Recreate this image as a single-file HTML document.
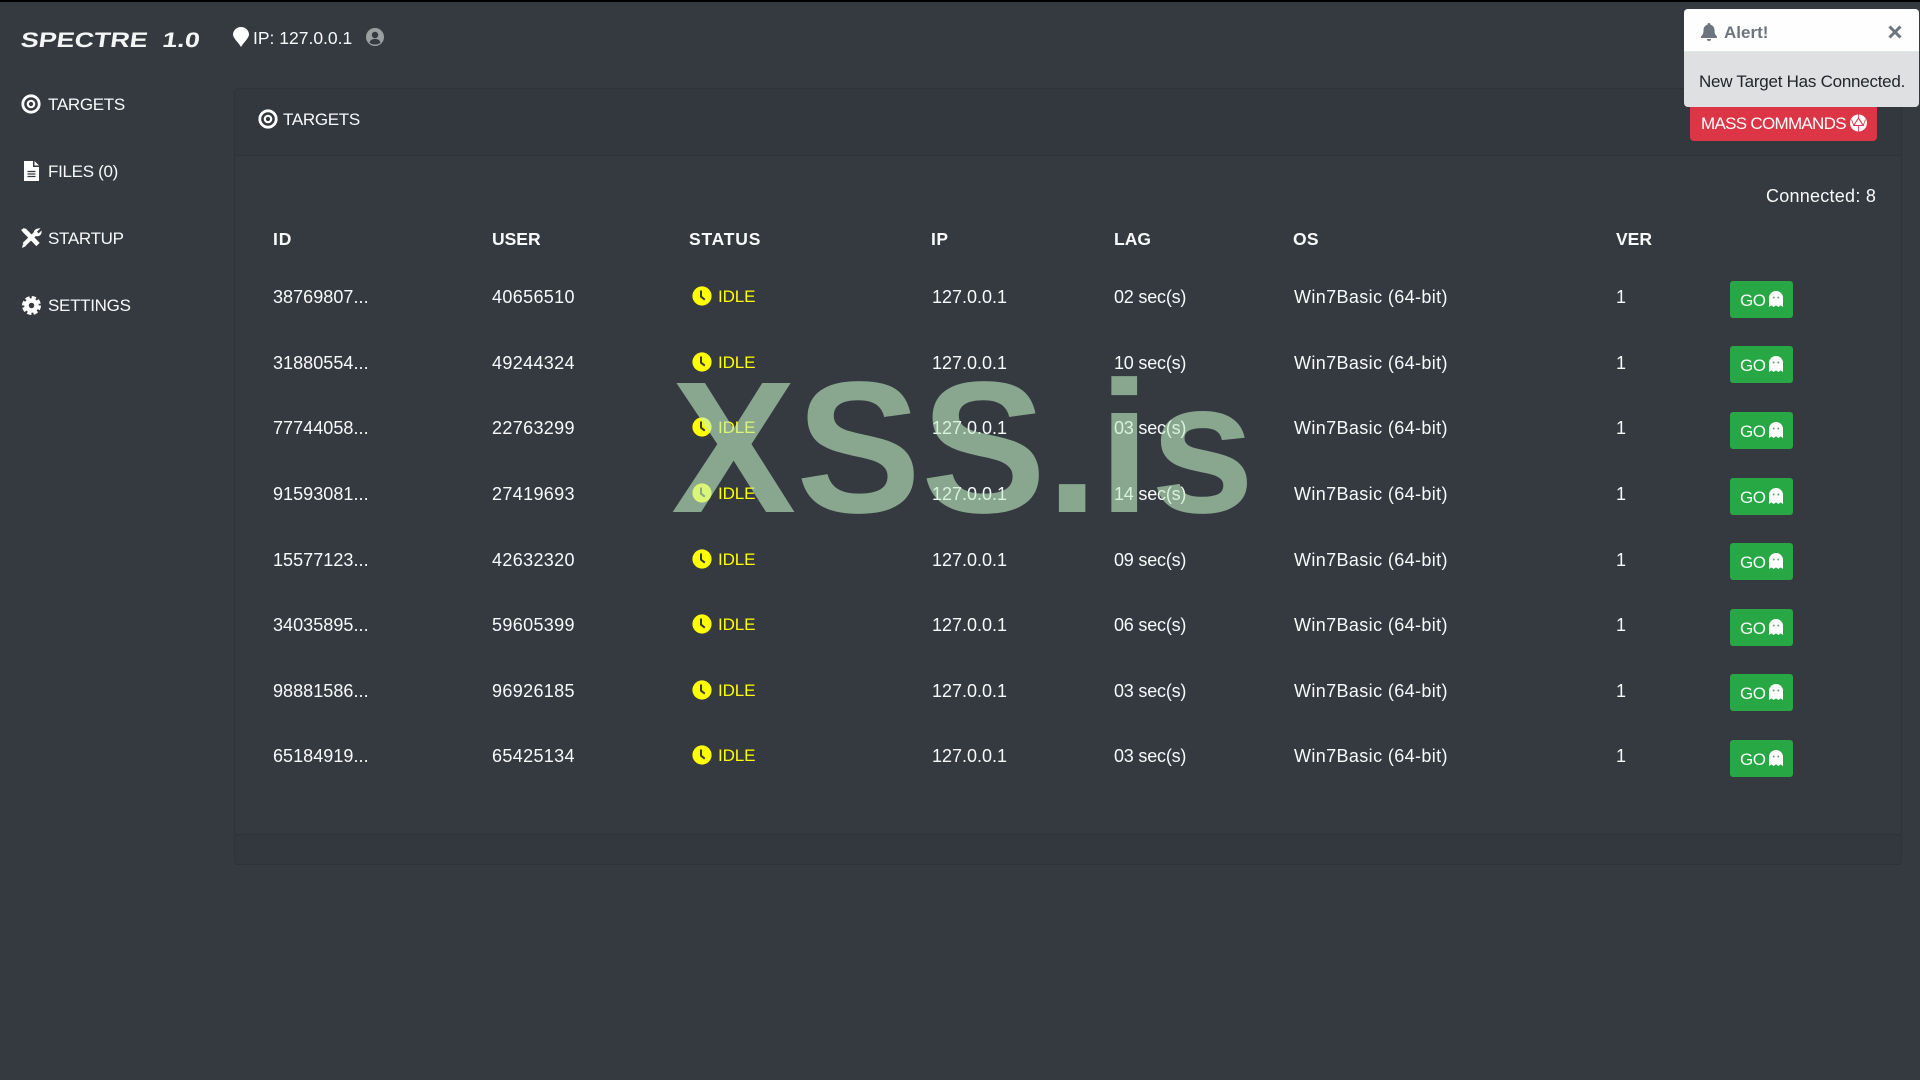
<!DOCTYPE html>
<html><head><meta charset="utf-8"><title>Spectre</title>
<style>
*{box-sizing:border-box}
html,body{margin:0;padding:0;width:1920px;height:1080px;overflow:hidden;background:#343a40}
body{font-family:"Liberation Sans",sans-serif;font-size:18px;color:#f8f9fa;position:relative;border-top:2px solid #000}
.a{position:absolute;white-space:nowrap;line-height:24px;height:24px}
svg{position:absolute;display:block}
#wrap{position:absolute;left:0;top:-2px;width:1920px;height:1080px}
.nav{font-size:17px;letter-spacing:-.3px;left:48px}
.card{position:absolute;left:234px;top:88px;width:1668px;height:777px;border:1px solid #2e3338;border-radius:4px}
.h1{position:absolute;left:0;top:0;right:0;height:67px;border-bottom:1px solid #2e3338;background:#32383e}
.f1{position:absolute;left:0;bottom:0;right:0;height:30px;border-top:1px solid #2e3338;background:#32383e}
.th{font-weight:bold;font-size:17.5px;top:227px}
.r{position:absolute;left:0;width:1920px;height:24px}
.r span{position:absolute;top:0;line-height:24px;white-space:nowrap}
.c1{left:273px;letter-spacing:.05px}.c2{left:492px;letter-spacing:.35px}.c4{left:932px}.c5{left:1114px;letter-spacing:-.2px}.c6{left:1294px;letter-spacing:.38px}.c7{left:1616px}
.c3{left:718px;color:#ff0;font-size:17px;letter-spacing:-.1px}
.go{position:absolute;left:1730px;width:63px;height:37px;background:#28a745;border-radius:3px;top:-4px}
.g2{top:-5px}
.go b{position:absolute;left:10px;top:8px;font-weight:normal;font-size:17px;line-height:24px;letter-spacing:-.5px;color:#f8f9fa}
.go svg{left:39px;top:10px}
.r>svg{left:692px;top:1px}
#wm{position:absolute;left:671px;top:343px;font-family:"Liberation Sans",sans-serif;font-weight:bold;font-size:187.5px;line-height:208px;height:208px;color:rgba(195,238,197,.6);white-space:nowrap;z-index:5}
.toast{position:absolute;left:1684px;top:9px;width:235px;height:98px;border-radius:4px;overflow:hidden;background:#dfe0e2;z-index:9}
.toast .t{position:absolute;left:0;top:0;right:0;height:43px;background:#fdfefd;border-bottom:1px solid #dfe9df}
.btn{position:absolute;left:1690px;top:104px;width:187px;height:37px;background:#dc3545;border-radius:4px}
</style></head>
<body>
<div id="wrap">
<svg width="0" height="0" style="position:absolute">
<defs>
<symbol id="clock" viewBox="0 0 20 20"><circle cx="10" cy="10" r="9.6" fill="#ff0"/><path d="M9 4.500v6.200l3.800 3" fill="none" stroke="#343a40" stroke-width="2"/></symbol>
<symbol id="ghost" viewBox="0 0 14 16"><path d="M0 16V7a7 7 0 0 1 14 0v9l-2.300-1.600L9.300 16 7 14.400 4.700 16 2.300 14.400z" fill="#fff"/><circle cx="4.700" cy="6.500" r="1" fill="#6a9a78"/><circle cx="9.300" cy="6.500" r="1" fill="#6a9a78"/></symbol>
<symbol id="target" viewBox="0 0 20 20"><circle cx="10" cy="10" r="8.200" fill="none" stroke="#fff" stroke-width="2.800"/><circle cx="10" cy="10" r="3.200" fill="none" stroke="#fff" stroke-width="2.200"/></symbol>
</defs>
</svg>

<svg style="left:0;top:20px" width="220" height="40"><g transform="translate(20 27) skewX(-8)"><text x="0" y="0" fill="#f4f5f5" font-family="Liberation Sans" font-size="21" font-weight="bold" textLength="179" lengthAdjust="spacingAndGlyphs" xml:space="preserve">SPECTRE  1.0</text></g></svg>

<svg style="left:233px;top:27px" width="16" height="20" viewBox="0 0 16 20"><path d="M8 20C5 15 0 11 0 7.500a8 7.500 0 0 1 16 0C16 11 11 15 8 20z" fill="#fff"/></svg>
<span class="a" style="left:253px;top:26px;font-size:17.5px">IP: 127.0.0.1</span>
<svg style="left:366px;top:28px" width="18" height="18" viewBox="0 0 18 18"><circle cx="9" cy="9" r="9" fill="#9aa09f"/><circle cx="9" cy="7" r="3.200" fill="#343a40"/><path d="M3.500 14.500c1-3 3-3.500 5.500-3.500s4.500.5 5.500 3.500c-1.500 1.500-3.500 2-5.500 2s-4-.5-5.500-2z" fill="#343a40"/></svg>

<svg style="left:21px;top:94px" width="20" height="20"><use href="#target"/></svg>
<span class="a nav" style="top:93px">TARGETS</span>
<svg style="left:24px;top:161px" width="15" height="20" viewBox="0 0 15 20"><path d="M0 0h9v6h6v14H0z" fill="#fff"/><path d="M10.500 0l4.500 4.500h-4.500z" fill="#fff"/><path d="M3.500 10.500h8M3.500 13h8M3.500 15.500h8" stroke="#343a40" stroke-width="1.200"/></svg>
<span class="a nav" style="top:160px">FILES (0)</span>
<svg style="left:21px;top:228px" width="21" height="20" viewBox="0 0 21 20"><path d="M3 2l14 14.500" stroke="#fff" stroke-width="4.500"/><path d="M0 2l3-2 5 4-3 3z" fill="#fff"/><path d="M3 16.500L14.500 5.500" stroke="#fff" stroke-width="4"/><path d="M13 7c-1.500-3.500 1.500-7.500 6.500-6.500L16 3.500l1.500 2 3-3c.8 5-3.500 7.500-7.500 4.500z" fill="#fff"/><path d="M1 20l1-4 3 2z" fill="#fff"/></svg>
<span class="a nav" style="top:227px">STARTUP</span>
<svg style="left:22px;top:296px" width="19" height="19" viewBox="0 0 19 19"><circle cx="9.500" cy="9.500" r="5" fill="none" stroke="#fff" stroke-width="4.500"/><circle cx="9.500" cy="9.500" r="8" fill="none" stroke="#fff" stroke-width="3" stroke-dasharray="4.200 2.080"/></svg>
<span class="a nav" style="top:294px">SETTINGS</span>

<div class="card"><div class="h1"></div><div class="f1"></div></div>
<svg style="left:258px;top:109px" width="20" height="20"><use href="#target"/></svg>
<span class="a nav" style="left:283px;top:108px">TARGETS</span>

<div class="btn"></div>
<span class="a" style="left:1701px;top:112px;font-size:17px;letter-spacing:-.7px;color:#fff">MASS COMMANDS</span>
<svg style="left:1850px;top:114px" width="17" height="18" viewBox="0 0 17 18"><circle cx="8.500" cy="9" r="8.500" fill="#fff"/><path d="M8.500 4l4.700 7.500H3.800z" fill="none" stroke="#dc3545" stroke-width="1.100"/><path d="M1.500 5.500l2.300 6M15.500 5.500l-2.300 6M8.500 17.500v-6M8.500 4V.5" stroke="#dc3545" stroke-width=".8"/></svg>

<span class="a" style="left:1766px;top:184px;letter-spacing:.25px">Connected: 8</span>

<span class="a th" style="left:273px;letter-spacing:.9px">ID</span>
<span class="a th" style="left:492px">USER</span>
<span class="a th" style="left:689px;letter-spacing:.8px">STATUS</span>
<span class="a th" style="left:931px;letter-spacing:.5px">IP</span>
<span class="a th" style="left:1114px">LAG</span>
<span class="a th" style="left:1293px;letter-spacing:.3px">OS</span>
<span class="a th" style="left:1616px">VER</span>

<div class="r" style="top:285px"><span class="c1">38769807...</span><span class="c2">40656510</span><svg width="20" height="20"><use href="#clock"/></svg><span class="c3">IDLE</span><span class="c4">127.0.0.1</span><span class="c5">02 sec(s)</span><span class="c6">Win7Basic (64-bit)</span><span class="c7">1</span><div class="go"><b>GO</b><svg width="14" height="16"><use href="#ghost"/></svg></div></div>
<div class="r" style="top:351px"><span class="c1">31880554...</span><span class="c2">49244324</span><svg width="20" height="20"><use href="#clock"/></svg><span class="c3">IDLE</span><span class="c4">127.0.0.1</span><span class="c5">10 sec(s)</span><span class="c6">Win7Basic (64-bit)</span><span class="c7">1</span><div class="go g2"><b>GO</b><svg width="14" height="16"><use href="#ghost"/></svg></div></div>
<div class="r" style="top:416px"><span class="c1">77744058...</span><span class="c2">22763299</span><svg width="20" height="20"><use href="#clock"/></svg><span class="c3">IDLE</span><span class="c4">127.0.0.1</span><span class="c5">03 sec(s)</span><span class="c6">Win7Basic (64-bit)</span><span class="c7">1</span><div class="go"><b>GO</b><svg width="14" height="16"><use href="#ghost"/></svg></div></div>
<div class="r" style="top:482px"><span class="c1">91593081...</span><span class="c2">27419693</span><svg width="20" height="20"><use href="#clock"/></svg><span class="c3">IDLE</span><span class="c4">127.0.0.1</span><span class="c5">14 sec(s)</span><span class="c6">Win7Basic (64-bit)</span><span class="c7">1</span><div class="go"><b>GO</b><svg width="14" height="16"><use href="#ghost"/></svg></div></div>
<div class="r" style="top:548px"><span class="c1">15577123...</span><span class="c2">42632320</span><svg width="20" height="20"><use href="#clock"/></svg><span class="c3">IDLE</span><span class="c4">127.0.0.1</span><span class="c5">09 sec(s)</span><span class="c6">Win7Basic (64-bit)</span><span class="c7">1</span><div class="go g2"><b>GO</b><svg width="14" height="16"><use href="#ghost"/></svg></div></div>
<div class="r" style="top:613px"><span class="c1">34035895...</span><span class="c2">59605399</span><svg width="20" height="20"><use href="#clock"/></svg><span class="c3">IDLE</span><span class="c4">127.0.0.1</span><span class="c5">06 sec(s)</span><span class="c6">Win7Basic (64-bit)</span><span class="c7">1</span><div class="go"><b>GO</b><svg width="14" height="16"><use href="#ghost"/></svg></div></div>
<div class="r" style="top:679px"><span class="c1">98881586...</span><span class="c2">96926185</span><svg width="20" height="20"><use href="#clock"/></svg><span class="c3">IDLE</span><span class="c4">127.0.0.1</span><span class="c5">03 sec(s)</span><span class="c6">Win7Basic (64-bit)</span><span class="c7">1</span><div class="go g2"><b>GO</b><svg width="14" height="16"><use href="#ghost"/></svg></div></div>
<div class="r" style="top:744px"><span class="c1">65184919...</span><span class="c2">65425134</span><svg width="20" height="20"><use href="#clock"/></svg><span class="c3">IDLE</span><span class="c4">127.0.0.1</span><span class="c5">03 sec(s)</span><span class="c6">Win7Basic (64-bit)</span><span class="c7">1</span><div class="go"><b>GO</b><svg width="14" height="16"><use href="#ghost"/></svg></div></div>

<div id="wm">XSS.is</div>

<div class="toast">
<div class="t"></div>
<svg style="left:17px;top:14px" width="16" height="18" viewBox="0 0 16 18"><path d="M8 0a1.500 1.500 0 0 1 1.500 1.700C12 2.300 13.500 4.500 13.500 7c0 4 1 5 2.500 6.500V15H0v-1.500C1.500 12 2.500 11 2.500 7c0-2.500 1.500-4.700 4-5.300A1.500 1.500 0 0 1 8 0z" fill="#6c757d"/><path d="M6 16h4a2 2 0 0 1-4 0z" fill="#6c757d"/></svg>
<span class="a" style="left:40px;top:12px;font-weight:bold;font-size:17px;color:#6c757d">Alert!</span>
<svg style="left:204px;top:16px" width="14" height="14" viewBox="0 0 14 14"><path d="M1.500 1.500l11 11M12.500 1.500l-11 11" stroke="#6c757d" stroke-width="3"/></svg>
<span class="a" style="left:15px;top:61px;font-size:17px;letter-spacing:-.25px;color:#212529">New Target Has Connected.</span>
</div>
</div>
</body></html>
